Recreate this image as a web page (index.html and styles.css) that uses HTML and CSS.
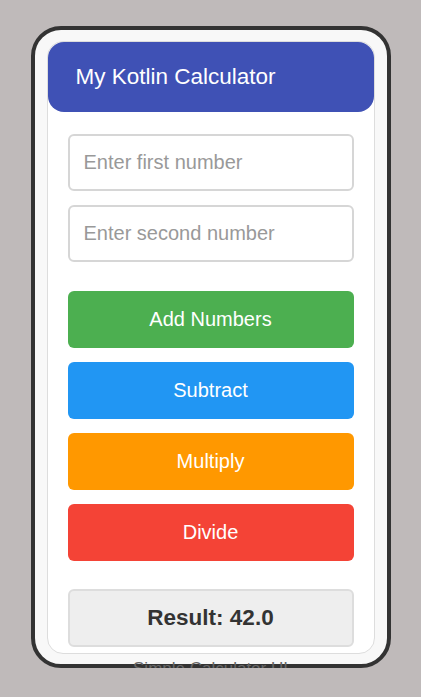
FILE: index.html
```html
<!DOCTYPE html>
<html lang="en">
<head>
    <meta charset="UTF-8">
    <meta name="viewport" content="width=device-width, initial-scale=1.0">
    <link rel="stylesheet" href="styles.css">
    <title>My Kotlin Calculator</title>
</head>
<body>
    <div class="phone">
        <div class="card">
            <div class="app-bar">My Kotlin Calculator</div>
            <div class="content">
                <input type="text" class="field" placeholder="Enter first number">
                <input type="text" class="field" placeholder="Enter second number">
                <button class="btn btn-add">Add Numbers</button>
                <button class="btn btn-sub">Subtract</button>
                <button class="btn btn-mul">Multiply</button>
                <button class="btn btn-div">Divide</button>
                <div class="result">Result: 42.0</div>
            </div>
        </div>
        <div class="caption">Simple Calculator UI</div>
    </div>
</body>
</html>
```

FILE: styles.css
```css
body {
    font-family: "Liberation Sans", Arial, sans-serif;
    background-color: #bfbaba;
    margin: 0;
    padding: 26px 0 0;
    display: flex;
    justify-content: center;
}

.phone {
    width: 360px;
    height: 642px;
    box-sizing: border-box;
    border: 4px solid #333;
    border-radius: 30px;
    background-color: #f8f8f8;
    padding: 11px 12px;
}

.card {
    background-color: #fff;
    border: 1px solid #ddd;
    border-radius: 16px;
}

.app-bar {
    background-color: #3f51b5;
    color: #fff;
    height: 70px;
    border-radius: 16px;
    padding-left: 28px;
    display: flex;
    align-items: center;
    font-size: 22.5px;
}

.content {
    padding: 22px 20px 6px;
    display: flex;
    flex-direction: column;
    gap: 14px;
}

.field {
    height: 57px;
    box-sizing: border-box;
    border: 2px solid #d6d6d6;
    border-radius: 6px;
    padding: 0 14px;
    font-family: inherit;
    font-size: 20px;
    color: #333;
    outline: none;
}

.field::placeholder {
    color: #999;
}

.btn {
    height: 57px;
    border: none;
    border-radius: 6px;
    color: #fff;
    font-family: inherit;
    font-size: 20px;
    cursor: pointer;
}

.btn-add {
    background-color: #4caf50;
    margin-top: 15px;
}

.btn-sub {
    background-color: #2196f3;
}

.btn-mul {
    background-color: #ff9800;
}

.btn-div {
    background-color: #f44336;
}

.result {
    margin-top: 14px;
    height: 58px;
    box-sizing: border-box;
    background-color: #eee;
    border: 2px solid #ddd;
    border-radius: 6px;
    display: flex;
    align-items: center;
    justify-content: center;
    font-size: 22.5px;
    font-weight: bold;
    color: #333;
}

.caption {
    margin-top: 5px;
    text-align: center;
    color: #666;
    font-size: 17px;
}
```
